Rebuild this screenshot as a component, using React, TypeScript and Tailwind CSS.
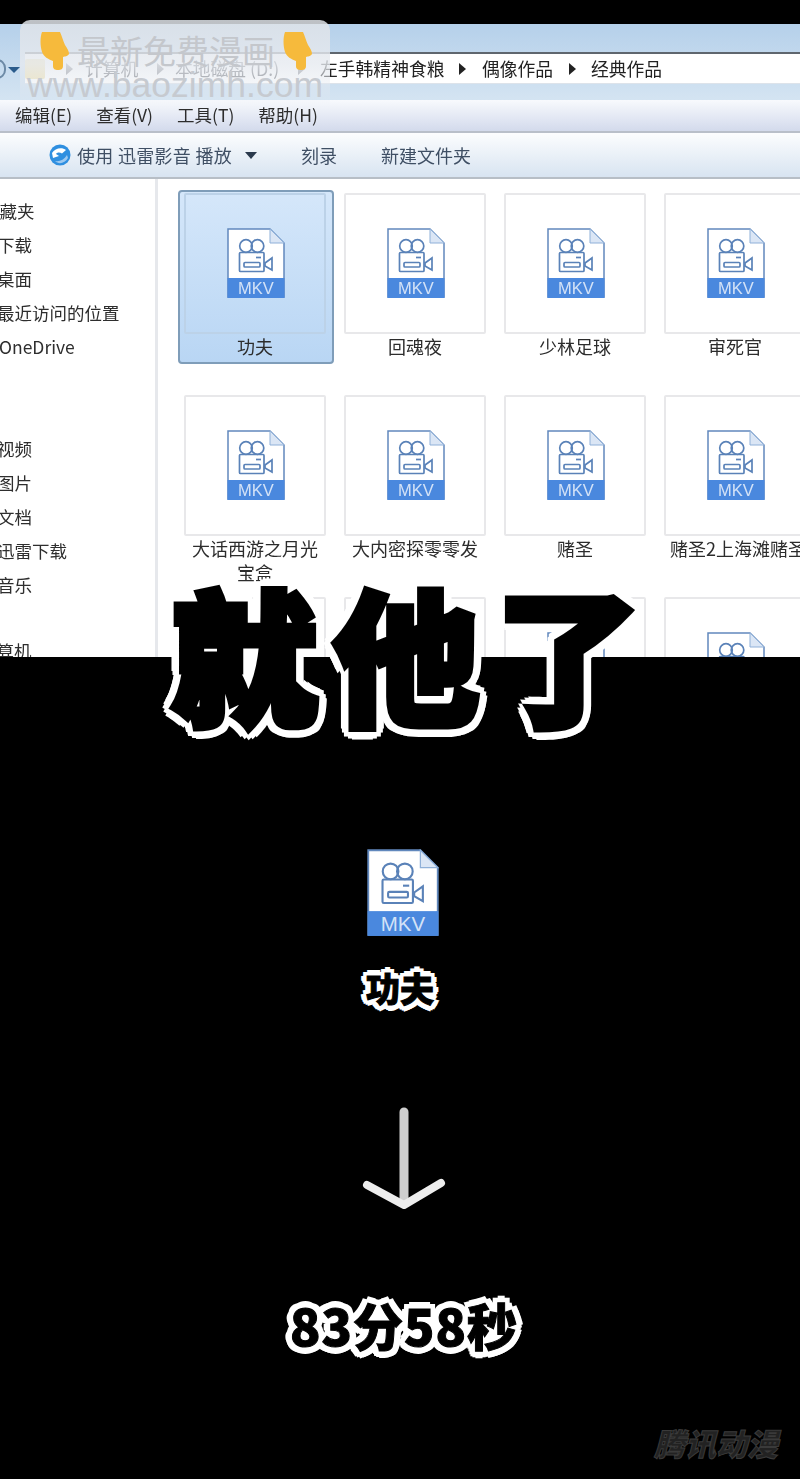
import React from "react";

function MkvIcon({ className }: { className: string }) {
  return (
    <svg viewBox="0 0 58 70" className={className}>
      <path d="M1 1H43L57 15V69H1Z" fill="#ffffff" stroke="#6188bd" strokeWidth="1.5" />
      <path d="M43 1V15H57Z" fill="#dbe6f5" stroke="#8fb0d8" strokeWidth="1" />
      <rect x="0.5" y="50" width="57" height="20" fill="#4a88de" />
      <text x="29" y="66" textAnchor="middle" fontSize="16.5" fontFamily="Liberation Sans, sans-serif" fill="#d3e2f7">MKV</text>
      <g fill="none" stroke="#5a82b8" strokeWidth="1.7">
        <circle cx="19" cy="18" r="6.3" />
        <circle cx="30.5" cy="18" r="6.3" />
        <rect x="12.5" y="24.5" width="24.5" height="19" rx="1" />
        <rect x="17" y="34.5" width="16" height="4.5" rx="1" />
        <path d="M38 35L45 30V42L38 38Z" />
        <path d="M29 29.5H34" />
      </g>
    </svg>
  );
}

function Hand() {
  return (
    <svg viewBox="0 0 29 38" className="w-[29px] h-[38px] shrink-0">
      <path d="M2 0H20C22 4 23 9 25 13C27 16 29 19 29 22C27 25 25 24 23 25V34C23 37 21 38 18 38C15 38 13 37 13 34V29C8 27 4 25 2 20C0 14 0 5 2 0Z" fill="#f6ba3c" />
    </svg>
  );
}

function Crumb({ dim }: { dim?: boolean }) {
  return <span className={`inline-block w-0 h-0 border-y-[6px] border-y-transparent border-l-[7px] ${dim ? "border-l-[#8a8c92]" : "border-l-[#222222]"}`} />;
}

type Item = { name: string; selected?: boolean };

const files: Item[] = [
  { name: "功夫", selected: true },
  { name: "回魂夜" },
  { name: "少林足球" },
  { name: "审死官" },
  { name: "大话西游之月光宝盒" },
  { name: "大内密探零零发" },
  { name: "赌圣" },
  { name: "赌圣2上海滩赌圣" },
  { name: "" },
  { name: "" },
  { name: "" },
  { name: "" },
];

function FileCell({ item }: { item: Item }) {
  return (
    <div
      className={`w-[156px] h-[174px] px-[4px] pt-[1px] border-2 rounded-[4px] ${
        item.selected ? "border-[#7f9db9] bg-gradient-to-b from-[#d5e7fa] to-[#b9d6f4]" : "border-transparent"
      }`}
    >
      <div
        className={`w-[142px] h-[141px] border-2 rounded-[2px] pl-[41px] pt-[33px] ${
          item.selected ? "border-[#bcd2e8]" : "border-[#e8e8ea] bg-white"
        }`}
      >
        <MkvIcon className="w-[58px] h-[70px]" />
      </div>
      <div
        className={`w-[142px] px-[6px] text-center text-[18px] leading-[24px] text-[#2c2c2c] ${
          item.name.startsWith("赌圣2") ? "whitespace-nowrap" : ""
        }`}
      >
        {item.name}
      </div>
    </div>
  );
}

const nav: { label: string; cls: string }[] = [
  { label: "收藏夹", cls: "ml-[-18px]" },
  { label: "下载", cls: "ml-[-3px]" },
  { label: "桌面", cls: "ml-[-3px]" },
  { label: "最近访问的位置", cls: "ml-[-3px]" },
  { label: "OneDrive", cls: "ml-[-1px] mb-[68px]" },
  { label: "视频", cls: "ml-[-3px]" },
  { label: "图片", cls: "ml-[-3px]" },
  { label: "文档", cls: "ml-[-3px]" },
  { label: "迅雷下载", cls: "ml-[-3px]" },
  { label: "音乐", cls: "ml-[-3px] mb-[32px]" },
  { label: "计算机", cls: "ml-[-21px]" },
];

export default function App() {
  return (
    <div className="relative w-[800px] h-[1479px] overflow-hidden bg-black flex flex-col items-stretch font-['Noto_Sans_CJK_SC','Noto_Sans',sans-serif]">
      <div className="h-[24px] shrink-0 bg-black" />

      {/* Explorer window */}
      <div className="h-[633px] shrink-0 overflow-hidden bg-white flex flex-col blur-[0.3px]">
        <div className="h-[76px] shrink-0 bg-gradient-to-b from-[#b5d0ea] to-[#d4e4f2] pt-[28px] flex flex-col">
          <div className="ml-[25px] h-[32px] flex items-center border-t-2 border-[#5f666e] border-b border-b-[#dde3ea] bg-white text-[17.8px] text-[#222222] whitespace-nowrap">
            <span className="w-[20px] h-[20px] bg-[#f0e2b0] rounded-[2px] mr-[21px]" />
            <Crumb dim />
            <span className="ml-[12px] w-[56px] text-[#6a6d73]">计算机</span>
            <span className="ml-[16px] flex"><Crumb dim /></span>
            <span className="ml-[11px] w-[106px] text-[#6a6d73]">本地磁盘 (D:)</span>
            <span className="ml-[17px] flex"><Crumb dim /></span>
            <span className="ml-[15px] w-[125px]">左手韩精神食粮</span>
            <span className="ml-[14px] flex"><Crumb /></span>
            <span className="ml-[16px] w-[72px]">偶像作品</span>
            <span className="ml-[15px] flex"><Crumb /></span>
            <span className="ml-[15px]">经典作品</span>
          </div>
        </div>
        <div className="h-[33px] shrink-0 flex items-center gap-[24px] pl-[15px] border-b-2 border-[#b9bfc9] bg-gradient-to-b from-[#f8fafd] to-[#d3daec] text-[17.5px] text-[#2d2d2d] whitespace-nowrap">
          <span>编辑(E)</span>
          <span>查看(V)</span>
          <span>工具(T)</span>
          <span>帮助(H)</span>
        </div>
        <div className="h-[46px] shrink-0 flex items-center pl-[49px] border-b-2 border-[#b7bec6] bg-gradient-to-b from-[#fcfdfe] to-[#d8e4f1] text-[18px] text-[#3f4f64] whitespace-nowrap">
          <svg viewBox="0 0 22 22" className="w-[22px] h-[22px] mr-[6px]">
            <circle cx="11" cy="11" r="10.5" fill="#2f8fe0" />
            <path d="M3 9C6 4 13 3 17 6L13 9.5C11 8 8 8 7 10L10 12L4 14Z" fill="#ffffff" />
            <path d="M6 17C10 18 15 16 18 11L19 14C16 19 10 21 6 17Z" fill="#9cc8f0" />
          </svg>
          <span className="tracking-[0.3px]">使用 迅雷影音 播放</span>
          <span className="ml-[13px] w-0 h-0 border-x-[6px] border-x-transparent border-t-[7px] border-t-[#2b3a4d]" />
          <span className="ml-[44px]">刻录</span>
          <span className="ml-[44px]">新建文件夹</span>
        </div>
        <div className="flex flex-1 min-h-0 overflow-hidden">
          <div className="w-[158px] shrink-0 border-r-[3px] border-[#e6e8ec] pt-[15px] text-[17.5px] text-[#2e2e2e] whitespace-nowrap overflow-hidden">
            {nav.map((n) => (
              <div key={n.label} className={`h-[34px] leading-[34px] ${n.cls}`}>
                {n.label}
              </div>
            ))}
          </div>
          <div className="grid grid-cols-[repeat(4,160px)] auto-rows-[202px] pl-[20px] pt-[11px]">
            {files.map((f, i) => (
              <FileCell key={i} item={f} />
            ))}
          </div>
        </div>
      </div>

      {/* Lower black panel */}
      <div className="flex flex-col items-center relative flex-1">
        <div className="-mt-[91px] ml-[28px] h-[170px] leading-[170px] text-[146px] font-black tracking-[16px] text-black whitespace-nowrap [-webkit-text-stroke:7px_black] [text-shadow:11px_0_0_#fff,-11px_0_0_#fff,0_11px_0_#fff,0_-11px_0_#fff,8px_8px_0_#fff,-8px_8px_0_#fff,8px_-8px_0_#fff,-8px_-8px_0_#fff,10px_4px_0_#fff,-10px_4px_0_#fff,4px_10px_0_#fff,-4px_10px_0_#fff,10px_-4px_0_#fff,-10px_-4px_0_#fff,4px_-10px_0_#fff,-4px_-10px_0_#fff]">
          就他了
        </div>
        <MkvIcon className="mt-[113px] ml-[6px] w-[72px] h-[87px]" />
        <div className="mt-[25px] h-[54px] leading-[54px] text-[34px] font-black text-black [-webkit-text-stroke:1px_black] [text-shadow:6px_0_0_#fff,-6px_0_0_#fff,0_6px_0_#fff,0_-6px_0_#fff,4px_4px_0_#fff,-4px_4px_0_#fff,4px_-4px_0_#fff,-4px_-4px_0_#fff,5px_2px_0_#fff,-5px_2px_0_#fff,2px_5px_0_#fff,-2px_5px_0_#fff]">
          功夫
        </div>
        <svg viewBox="0 0 90 104" className="mt-[92px] ml-[9px] w-[90px] h-[104px]">
          <path d="M44 5V92" stroke="#cfcfcf" strokeWidth="9" strokeLinecap="round" />
          <path d="M7 78L44 98L81 76" fill="none" stroke="#ededed" strokeWidth="8" strokeLinecap="round" strokeLinejoin="round" />
        </svg>
        <div className="mt-[78px] ml-[8px] h-[70px] leading-[70px] text-[50px] font-black tracking-[1px] text-black whitespace-nowrap [-webkit-text-stroke:1px_black] [text-shadow:7px_0_0_#fff,-7px_0_0_#fff,0_7px_0_#fff,0_-7px_0_#fff,5px_5px_0_#fff,-5px_5px_0_#fff,5px_-5px_0_#fff,-5px_-5px_0_#fff,6px_3px_0_#fff,-6px_3px_0_#fff,3px_6px_0_#fff,-3px_6px_0_#fff]">
          83分58秒
        </div>
        <div className="absolute right-[22px] bottom-[18px] text-[31px] leading-[36px] font-black italic text-[#222222] [-webkit-text-stroke:1px_#3a3a3a]">
          腾讯动漫
        </div>
      </div>

      {/* Watermark banner */}
      <div className="absolute left-[20px] top-[20px] w-[310px] h-[88px] rounded-t-[10px] bg-gradient-to-b from-[#dfe3e8d9] via-[#e6eaf0cc] to-[#eef1f700] flex flex-col items-center overflow-hidden">
        <div className="flex items-start gap-[7px] w-full pl-[20px] pt-[12px] h-[44px]">
          <Hand />
          <span className="w-[200px] text-[33px] leading-[36px] text-[#c4c7cc] text-center whitespace-nowrap">最新免费漫画</span>
          <Hand />
        </div>
        <div className="mt-[1px] text-[35.5px] leading-[40px] font-['Liberation_Sans',sans-serif] text-[#c6cad0] whitespace-nowrap">
          www.baozimh.com
        </div>
      </div>

      {/* Back-button fragment */}
      <span className="absolute left-[-12px] top-[59px] w-[18px] h-[20px] rounded-full border-2 border-[#6d8aa6]" />
      <span className="absolute left-[8px] top-[67px] w-0 h-0 border-x-[6px] border-x-transparent border-t-[6px] border-t-[#2a5b8c]" />
    </div>
  );
}
